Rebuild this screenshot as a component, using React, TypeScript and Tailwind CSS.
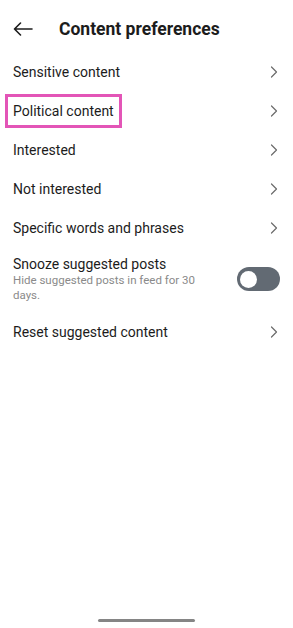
import React from 'react';

const rows = [
  'Sensitive content',
  'Political content',
  'Interested',
  'Not interested',
  'Specific words and phrases',
];

function Chevron() {
  return (
    <svg width="8" height="12" viewBox="0 0 8 12" fill="none" className="shrink-0">
      <path d="M1.5 1 L6.5 6 L1.5 11" stroke="#6b6b6b" strokeWidth="1.2" strokeLinecap="round" strokeLinejoin="round" />
    </svg>
  );
}

export default function App() {
  return (
    <div
      className="relative w-[293px] h-[628px] bg-white overflow-hidden text-[#1c1c1c]"
      style={{ fontFamily: 'Roboto, "Noto Sans", sans-serif' }}
    >
      <div className="flex items-center h-[52px] pl-[13px] pt-[6px]">
        <svg width="20" height="14" viewBox="0 0 20 14" fill="none">
          <path d="M19 7 H1.5 M7.5 1 L1.5 7 L7.5 13" stroke="#1c1c1c" strokeWidth="1.6" strokeLinecap="round" strokeLinejoin="round" />
        </svg>
        <div className="ml-[26px] text-[17.5px] font-bold">Content preferences</div>
      </div>

      <div className="flex flex-col">
        {rows.map((r, i) => (
          <div key={r} className="flex items-center justify-between h-[39px] pl-[13px] pr-[15px]">
            {i === 1 ? (
              <div className="-ml-[8px] px-[5px] py-[4px] border-[3px] border-[#e355b7] text-[14px] leading-[20px]">{r}</div>
            ) : (
              <div className="text-[14px] leading-[20px]">{r}</div>
            )}
            <Chevron />
          </div>
        ))}

        <div className="flex items-center justify-between pl-[13px] pr-[13px] pt-[8px] pb-[9px]">
          <div className="flex flex-col w-[200px]">
            <div className="text-[14px] leading-[18px]">Snooze suggested posts</div>
            <div className="text-[11.5px] leading-[15px] text-[#8a8a8a]">Hide suggested posts in feed for 30 days.</div>
          </div>
          <div className="w-[43px] h-[24px] rounded-full bg-[#626a73] flex items-center px-[3px]">
            <div className="w-[17px] h-[17px] rounded-full bg-white" />
          </div>
        </div>

        <div className="flex items-center justify-between h-[39px] pl-[13px] pr-[15px]">
          <div className="text-[14px] leading-[20px]">Reset suggested content</div>
          <Chevron />
        </div>
      </div>

      <div className="absolute left-[98px] bottom-[6px] w-[97px] h-[3px] rounded-full bg-[#858585]" />
    </div>
  );
}
